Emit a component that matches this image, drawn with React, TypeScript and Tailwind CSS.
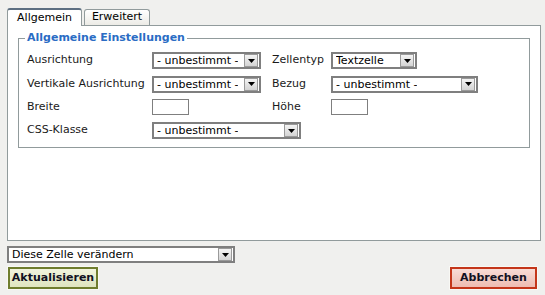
import React from 'react';

function Arrow() {
  return (
    <span className="flex h-[13px] w-[14px] shrink-0 items-center justify-center border border-[#9a9a9a] bg-gradient-to-b from-[#f4f4f4] to-[#d4d4d4]">
      <svg width="7" height="4" viewBox="0 0 7 4">
        <path d="M0 0h7L3.5 4z" fill="#000" />
      </svg>
    </span>
  );
}

function Select({ value, className }: { value: string; className: string }) {
  return (
    <div className={`flex h-[17px] items-center justify-between border-2 border-[#7f7f7f] bg-white pl-[3px] pr-[1px] ${className}`}>
      <span className="overflow-hidden whitespace-nowrap leading-none text-black">{value}</span>
      <Arrow />
    </div>
  );
}

function TextInput({ className }: { className: string }) {
  return <div className={`h-[16px] border border-[#7f7f7f] bg-white ${className}`} />;
}

export default function App() {
  return (
    <div
      className="flex h-[295px] w-[545px] flex-col bg-[#f0f0ee] text-[11px] text-[#1a1a1a]"
      style={{ fontFamily: '"DejaVu Sans", Verdana, sans-serif' }}
    >
      {/* tabs */}
      <div className="flex items-end gap-[2px] pl-[7px] pt-[8px]">
        <div className="relative z-10 -mb-px flex h-[18px] w-[75px] items-center justify-center rounded-t-[3px] border border-b-0 border-[#919b9c] border-t-[#5d6f82] border-t-2 bg-white text-black">
          Allgemein
        </div>
        <div className="flex h-[16px] w-[66px] items-center justify-center rounded-t-[3px] border border-b-0 border-[#919b9c] bg-gradient-to-b from-white to-[#ecebe6] text-black">
          Erweitert
        </div>
      </div>

      {/* panel */}
      <div className="ml-[7px] mr-[4px] h-[216px] border border-[#919b9c] bg-white px-[10px] pt-[4px]">
        <fieldset className="border border-[#919b9c] pb-[4px] pl-[8px] pr-0">
          <legend className="ml-[-2px] px-[2px] font-bold text-[#2a6cc4]">Allgemeine Einstellungen</legend>
          <div className="mt-[2px] grid grid-cols-[125px_120px_59px_1fr] grid-rows-[24px_23px_23px_24px] items-center">
            <span>Ausrichtung</span>
            <Select value="- unbestimmt -" className="w-[109px]" />
            <span>Zellentyp</span>
            <Select value="Textzelle" className="w-[86px]" />

            <span>Vertikale Ausrichtung</span>
            <Select value="- unbestimmt -" className="w-[109px]" />
            <span>Bezug</span>
            <Select value="- unbestimmt -" className="w-[147px]" />

            <span>Breite</span>
            <TextInput className="w-[37px]" />
            <span>Höhe</span>
            <TextInput className="w-[37px]" />

            <span>CSS-Klasse</span>
            <div className="col-span-3">
              <Select value="- unbestimmt -" className="w-[149px]" />
            </div>
          </div>
        </fieldset>
      </div>

      {/* bottom */}
      <div className="mt-[5px] pl-[7px]">
        <Select value="Diese Zelle verändern" className="w-[228px]" />
      </div>
      <div className="mt-[3px] flex justify-between pl-[7px] pr-[7px]">
        <button className="h-[24px] w-[92px] border border-[#f8f8f4] p-0">
          <span className="flex h-full w-full items-center justify-center border-2 border-[#6f7d2e] bg-gradient-to-b from-[#f1f4de] to-[#dfe5bf] font-bold text-[#111122]">
            Aktualisieren
          </span>
        </button>
        <button className="h-[24px] w-[89px] border border-[#f8f8f4] p-0">
          <span className="flex h-full w-full items-center justify-center border-2 border-[#c4361a] bg-gradient-to-b from-[#f8dcd6] to-[#eebcb2] font-bold text-[#111122]">
            Abbrechen
          </span>
        </button>
      </div>
    </div>
  );
}
